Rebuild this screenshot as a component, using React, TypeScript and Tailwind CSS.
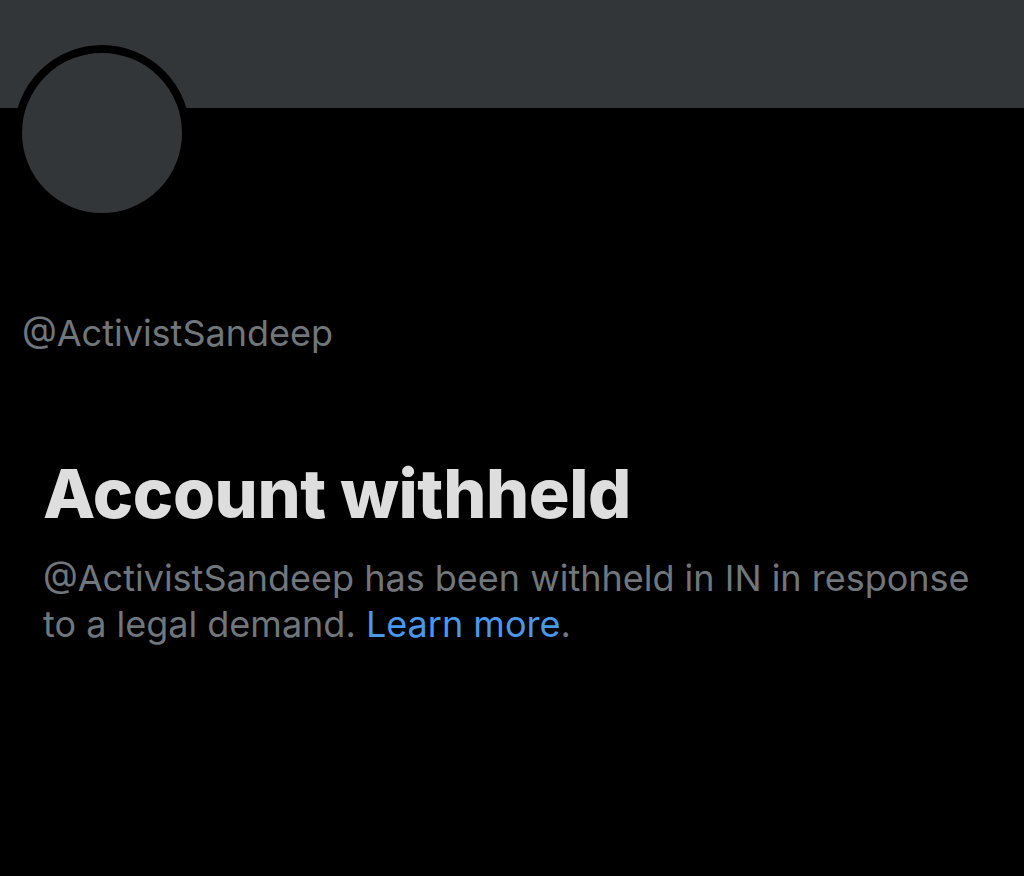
export default function App() {
  return (
    <div className="w-[1024px] h-[876px] bg-black overflow-hidden" style={{ fontFamily: 'Inter, "Liberation Sans", sans-serif' }}>
      <div className="h-[108px] bg-[#333639]" />
      <div className="pl-[14px] -mt-[63px]">
        <div className="w-[176px] h-[176px] rounded-full bg-[#333639] border-[8px] border-black" />
      </div>
      <div className="pl-[22px] pt-[90px] text-[36px] leading-[44px] text-[#71767b]">@ActivistSandeep</div>
      <div className="pl-[43px] pr-[40px] pt-[98px]">
        <h1 className="text-[68px] leading-[80px] font-extrabold text-[#dedede] tracking-[-0.4px]">Account withheld</h1>
        <p className="mt-[22px] text-[36px] leading-[46px] text-[#71767b]">
          @ActivistSandeep has been withheld in IN in response to a legal demand.{' '}
          <span className="text-[#4a98e9]">Learn more</span>.
        </p>
      </div>
    </div>
  );
}
